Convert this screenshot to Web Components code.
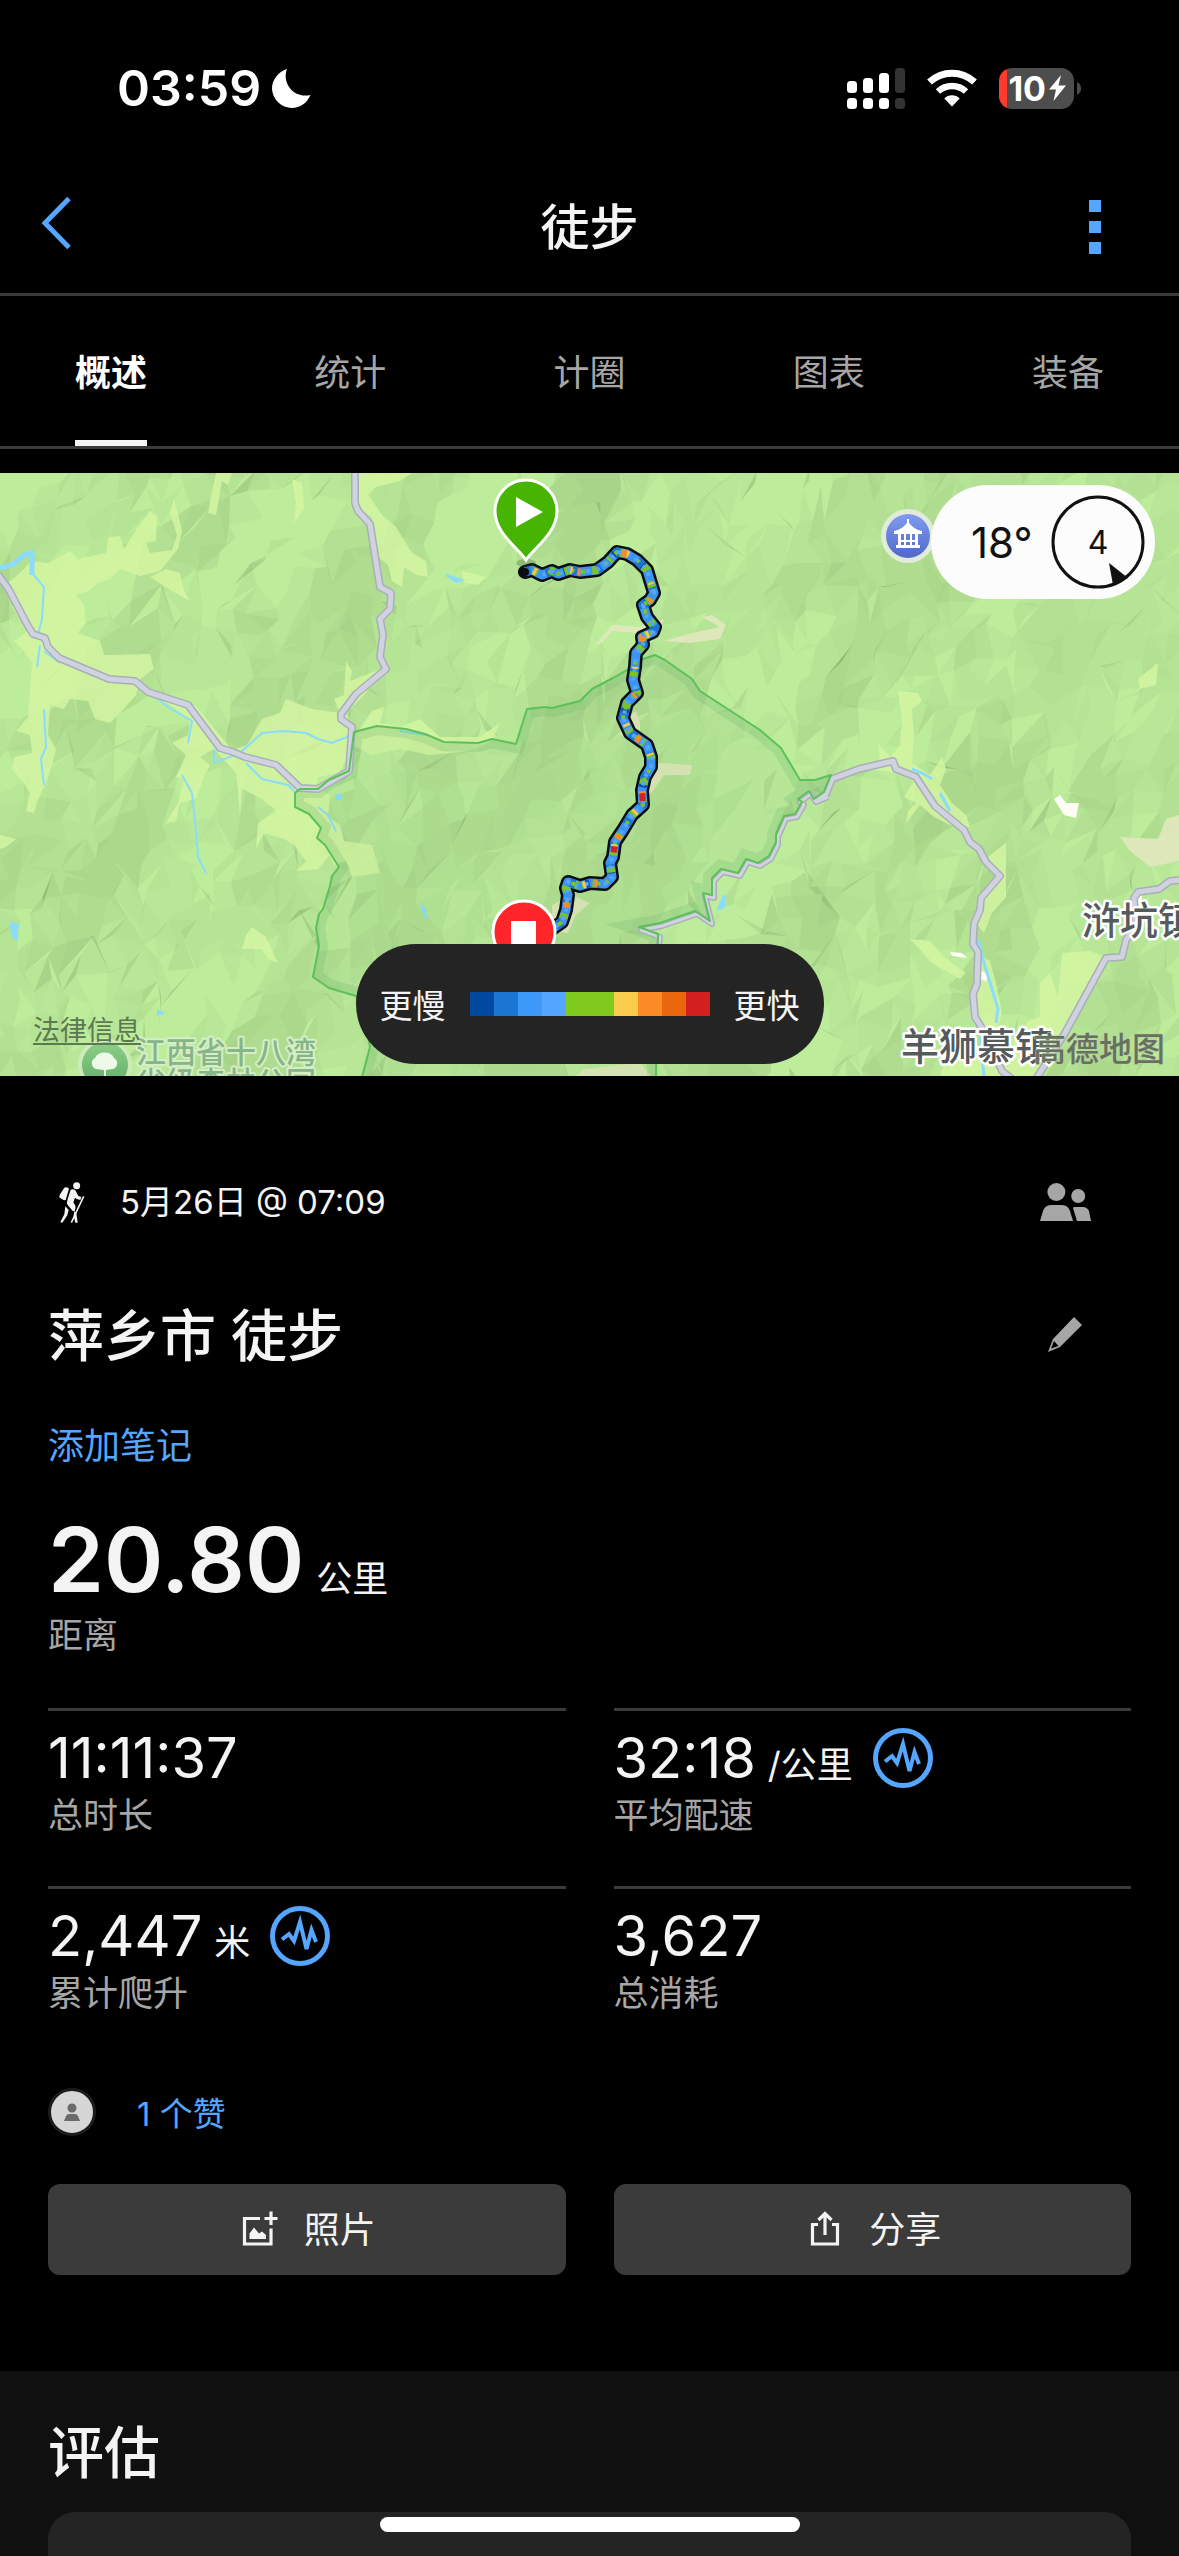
<!DOCTYPE html>
<html lang="zh-CN">
<head>
<meta charset="utf-8">
<meta name="viewport" content="width=device-width, initial-scale=1">
<title>徒步</title>
<style>
  html { background: #000; }
  body {
    margin: 0;
    color: #f4f4f4;
    font-family: Inter, "Noto Sans CJK SC", sans-serif;
    font-size: 36px;
    --accent: #54a6ff;
    --muted: #a6a6a6;
    --rule: #3a3a3a;
    --gutter: 48px;
  }
</style>
</head>
<body>
<activity-page>
  <status-bar slot="top" time="03:59" battery="10"></status-bar>
  <nav-header slot="top">徒步</nav-header>
  <tab-strip slot="top" labels="概述,统计,计圈,图表,装备" active="0"></tab-strip>
  <route-map>
    <weather-pill slot="weather" temp="18°" wind="4"></weather-pill>
    <pace-legend slot="legend"></pace-legend>
  </route-map>
  <activity-summary when="5月26日 @ 07:09" name="萍乡市 徒步">
    <stat-value hero value="20.80" unit="公里">距离</stat-value>
    <stat-value slot="stats" value="11:11:37">总时长</stat-value>
    <stat-value slot="stats" value="32:18" unit="/公里" chart>平均配速</stat-value>
    <stat-value slot="stats" value="2,447" unit="米" chart>累计爬升</stat-value>
    <stat-value slot="stats" value="3,627">总消耗</stat-value>
    <like-row slot="actions">1 个赞</like-row>
    <action-button slot="buttons" icon="photo">照片</action-button>
    <action-button slot="buttons" icon="share">分享</action-button>
  </activity-summary>
  <review-section>评估</review-section>
</activity-page>

<script>
class ActivityPage extends HTMLElement {
  constructor() {
    super();
    this.attachShadow({ mode: "open" });
    this.shadowRoot.innerHTML = `
      <style>
        :host { display: flex; flex-direction: column; height: 100vh; overflow: hidden; }
        header { flex: none; }
        main { flex: 1; display: flex; flex-direction: column; padding-top: 24px; min-height: 0; }
        .home { position: fixed; left: 50%; bottom: 24px; width: 420px; height: 15px; margin-left: -210px; border-radius: 8px; background: #fff; }
      </style>
      <header><slot name="top"></slot></header>
      <main><slot></slot></main>
      <div class="home"></div>
    `;
  }
}
customElements.define("activity-page", ActivityPage);

class StatusBar extends HTMLElement {
  constructor() {
    super();
    this.attachShadow({ mode: "open" });
    this.render();
  }

  render() {
    this.shadowRoot.innerHTML = `
      <style>
        :host { display: flex; align-items: center; justify-content: space-between; height: 176px; padding: 0 98px 0 117px; color: #fff; }
        .left, .right { display: flex; align-items: center; }
        .left { gap: 11px; font-size: 50px; font-weight: 600; }
        .right { gap: 22px; }
        svg { display: block; }
        .battery { display: flex; align-items: center; gap: 3px; }
        .cell {
          display: flex; align-items: center; justify-content: flex-end; gap: 3px; box-sizing: border-box;
          width: 75px; height: 41px; padding-right: 8px; border-radius: 13px;
          background: linear-gradient(90deg, #ff3b30 8px, #4d4d4d 8px);
          font-size: 34px; font-weight: 700; line-height: 41px;
        }
      </style>
      <div class="left">
        <span>${this.getAttribute("time")}</span>
        <svg width="39" height="39" viewBox="0 0 39 39"><path fill="#fff" d="M15 0C13 5 13 12 17 18C22 25 30 28 38.500 26C35 34 28 39 20 39A20 20 0 0 1 0 19.500C0 11 6 3 15 0Z"/></svg>
      </div>
      <div class="right">
        <svg width="58" height="41" viewBox="0 0 58 41" fill="#fff">
          <rect x="0" y="13" width="10" height="12" rx="3.500"/><rect x="16" y="10" width="10" height="15" rx="3.500"/>
          <rect x="32" y="5" width="10" height="20" rx="3.500"/><rect x="48" y="0" width="10" height="25" rx="3.500" fill="#333"/>
          <rect x="0" y="30" width="10" height="11" rx="3.500"/><rect x="16" y="30" width="10" height="11" rx="3.500"/>
          <rect x="32" y="30" width="10" height="11" rx="3.500"/><rect x="48" y="30" width="10" height="11" rx="3.500" fill="#333"/>
        </svg>
        <svg width="50" height="38" viewBox="0 0 50 38" fill="none" stroke="#fff">
          <path stroke-width="7" d="M2.500 13A33 33 0 0 1 47.500 13"/>
          <path stroke-width="6.500" d="M11 22.500A20.500 20.500 0 0 1 39 22.500"/>
          <path stroke="none" fill="#fff" d="M17.300 29.500A11 11 0 0 1 32.700 29.500L25 37.500Z"/>
        </svg>
        <div class="battery">
          <div class="cell">
            <span>${this.getAttribute("battery")}</span>
            <svg width="17" height="26" viewBox="0 0 17 26"><path fill="#fff" d="M12 0L0 14.500H7L4.500 26L17 10.500H9.500Z"/></svg>
          </div>
          <svg width="4" height="13" viewBox="0 0 4 13"><path fill="#4d4d4d" d="M0 0Q4 2 4 6.500T0 13Z"/></svg>
        </div>
      </div>
    `;
  }
}
customElements.define("status-bar", StatusBar);

class NavHeader extends HTMLElement {
  constructor() {
    super();
    this.attachShadow({ mode: "open" });
    this.shadowRoot.innerHTML = `
      <style>
        :host { display: grid; grid-template-columns: 1fr auto 1fr; align-items: center; height: 101px; padding: 0 36px 16px; border-bottom: 3px solid var(--rule); }
        h1 { margin: 0; padding-top: 2px; font-size: 49px; line-height: 60px; font-weight: 500; }
        button { display: flex; padding: 5px; border: 0; background: none; color: var(--accent); }
        .back { justify-self: start; align-self: start; padding-top: 20px; }
        .more { justify-self: end; padding-right: 42px; }
      </style>
      <button class="back" aria-label="返回">
        <svg width="30" height="54" viewBox="0 0 30 54"><path d="M28 2.500L4 27L28 51.500" fill="none" stroke="currentColor" stroke-width="5"/></svg>
      </button>
      <h1><slot></slot></h1>
      <button class="more" aria-label="更多">
        <svg width="12" height="54" viewBox="0 0 12 54" fill="currentColor"><rect width="12" height="12"/><rect y="21" width="12" height="12"/><rect y="42" width="12" height="12"/></svg>
      </button>
    `;
  }
}
customElements.define("nav-header", NavHeader);

class TabStrip extends HTMLElement {
  constructor() {
    super();
    this.attachShadow({ mode: "open" });
    this.render();
  }

  render() {
    const active = Number(this.getAttribute("active"));
    const tabs = this.getAttribute("labels").split(",").map((label, i) =>
      `<button role="tab" aria-selected="${i === active}">${label}</button>`).join("");
    this.shadowRoot.innerHTML = `
      <style>
        :host { display: block; border-bottom: 3px solid var(--rule); }
        div { display: flex; justify-content: space-between; padding: 0 75px; }
        button {
          height: 150px; padding: 3px 0 0; border: 0; border-bottom: 6px solid transparent; background: none;
          color: var(--muted); font: inherit; font-size: 36px;
        }
        button[aria-selected="true"] { color: #fff; font-weight: 700; border-color: #f4f4f4; }
      </style>
      <div role="tablist">${tabs}</div>
    `;
    this.shadowRoot.querySelectorAll("button").forEach((btn, i) => {
      btn.onclick = () => { this.setAttribute("active", i); this.render(); };
    });
  }
}
customElements.define("tab-strip", TabStrip);

// Low-poly hillshade, grouped in a few shade levels
function terrain(width, height, cell) {
  const hash = (x, y) => {
    const s = Math.sin(x * 127.1 + y * 311.7) * 43758.5453;
    return s - Math.floor(s);
  };
  const noise = (x, y) => {
    const xi = Math.floor(x), yi = Math.floor(y);
    const u = x - xi, v = y - yi;
    const a = hash(xi, yi) * (1 - u) + hash(xi + 1, yi) * u;
    const b = hash(xi, yi + 1) * (1 - u) + hash(xi + 1, yi + 1) * u;
    return a * (1 - v) + b * v;
  };
  const point = (i, j) => {
    const x = (i + (hash(i, j + 50) - 0.5) * 1.2) * cell;
    const y = (j + (hash(i + 90, j) - 0.5) * 1.2) * cell * 1.2;
    const p = x * 0.86 + y * 0.5, q = y * 0.86 - x * 0.5;
    const z = noise(p / 80, q / 110) * 62 + noise(q / 37 + 7, p / 45) * 30 + noise(x / 17, y / 23) * 6;
    return [x, y, z];
  };
  const levels = {};
  const add = (a, b, c) => {
    const ux = b[0] - a[0], uy = b[1] - a[1], uz = b[2] - a[2];
    const vx = c[0] - a[0], vy = c[1] - a[1], vz = c[2] - a[2];
    const nx = uy * vz - uz * vy, ny = uz * vx - ux * vz, nz = Math.abs(ux * vy - uy * vx) || 1;
    const light = (nx * 0.8 + ny * 0.6) / Math.hypot(nx, ny, nz);
    const shade = Math.max(0, Math.min(9, Math.round(2 + light * 6)));
    (levels[shade] ||= []).push(`M${a[0].toFixed()} ${a[1].toFixed()}L${b[0].toFixed()} ${b[1].toFixed()}L${c[0].toFixed()} ${c[1].toFixed()}Z`);
  };
  for (let j = -1; j * cell * 1.2 < height + cell; j++) {
    for (let i = -1; i * cell < width + cell; i++) {
      const a = point(i, j), b = point(i + 1, j), c = point(i, j + 1), d = point(i + 1, j + 1);
      if (hash(i, j) > 0.5) { add(a, b, c); add(b, d, c); }
      else { add(a, b, d); add(a, d, c); }
    }
  }
  return Object.entries(levels).map(([shade, d]) =>
    `<path fill="#4a6a38" fill-opacity="${(shade * 0.03).toFixed(3)}" d="${d.join("")}"/>`).join("");
}

const ROAD_WEST = "M355 0V30L358 38L370 51L380 114L391 120L390 136L380 146L383 162L380 184L386 196L356 221L341 241V246L352 254L349 298L318 316L300 315L276 292L245 284L233 279L220 275L188 232L148 219L135 208L109 206L59 185L48 174L45 165L33 161L28 153L8 115L-2 102";
const ROAD_EAST = "M814 328L826 321L832 306L859 296L893 288L896 296L916 304L935 333L964 357L970 369L979 376L986 389L1000 403L981 425L980 437L974 451L973 471L978 479L977 511L973 521L975 544L985 560L1002 598L1012 606";
const ROAD_SOUTH = "M1181 407L1170 408L1159 416L1138 419L1134 425L1136 453L1126 467L1122 484L1106 485L1065 560L1036 606";
const TRACK = "M826 321L814 326L809 318L798 326L802 329L795 341L784 343L776 361L776 369L769 383L758 390L746 386L738 400L721 396L712 405V422L703 420L710 448L695 438L660 450L639 454L658 461L656 476";
const PARK = "M362 604L370 574L364 540L356 523L329 515L313 504L319 473L316 455L319 441L323 436L330 413L332 403L339 394L325 372L317 365L321 355L309 341L295 334V320L300 316H318L329 307L349 298L354 259L377 253L406 256L425 261L444 269L478 270L492 266L516 271L527 236L545 234L552 235L580 228L592 216L613 205L627 197L640 187L655 182L665 187L692 206L700 218L760 257L781 275L800 307H815L831 302L824 319L814 326L809 318L798 326L802 329L795 341L784 343L776 361L776 369L769 383L758 390L746 386L738 400L721 396L712 405V422L703 420L710 448L695 438L660 450L639 454L658 461L656 604";
const ROUTE = "M525 99L532 97L542 102L552 98L558 101L570 97L580 99L597 97L608 89L617 79L627 81L637 87L647 97L650 107L654 120L650 127L643 132L647 144L655 154L653 159L642 164L643 172L636 180L635 194L633 207L637 220L627 230L623 245L630 260L647 272L651 284V294L645 304L642 317L643 332L632 342L623 357L615 369L613 384L610 390L612 404L605 411L590 410L580 413L568 409L566 415L568 422L566 437L562 449L552 456";

class RouteMap extends HTMLElement {
  constructor() {
    super();
    this.attachShadow({ mode: "open" });
    this.shadowRoot.innerHTML = `
      <style>
        :host { display: block; flex: none; position: relative; aspect-ratio: 1179 / 603; overflow: hidden; background: #bdec9b; }
        svg { position: absolute; inset: 0; width: 100%; height: 100%; }
        svg text { font-family: "Noto Sans CJK SC", sans-serif; paint-order: stroke; stroke-linejoin: round; }
        .town { font-size: 38px; font-weight: 500; fill: #555a5c; stroke: #fff; stroke-width: 5px; }
        .park-name { font-size: 30px; font-weight: 500; fill: #87b488; stroke: #d4efc4; stroke-width: 4px; }
        .brand { font-size: 33px; font-weight: 500; fill: #687062; stroke: #b9d3a4; stroke-width: 1px; }
        a { position: absolute; left: 33px; bottom: 30px; font-size: 27px; line-height: 30px; color: #5c7850; text-underline-offset: 3px; }
        .weather { position: absolute; top: 12px; right: 24px; }
        .legend { position: absolute; bottom: 12px; left: 0; right: 0; display: flex; justify-content: center; }
      </style>
      <svg viewBox="0 0 1179 603" preserveAspectRatio="xMidYMid slice" aria-label="路线地图">
        <defs>
          <clipPath id="park"><path d="${PARK}Z"/></clipPath>
          <linearGradient id="poi" x2="0" y2="1"><stop stop-color="#7f9cf0"/><stop offset="1" stop-color="#5068c8"/></linearGradient>
          <linearGradient id="tree" x2="0" y2="1"><stop stop-color="#8bcf86"/><stop offset="1" stop-color="#62ad68"/></linearGradient>
        </defs>
        <g>${terrain(1179, 603, 17)}</g>
        <g fill="#d6f6a3" fill-opacity=".8">
          <path d="M4 113L20 100L31 88L48 90L70 78L78 86L96 82L106 80L108 64L120 63L124 76L131 65L136 57L150 38L157 44L156 68L146 70L150 80L172 77L177 62L170 40L174 25L179 45L182 58L178 76L160 98L140 103L120 96L110 106L98 110L88 118L76 122L84 132L86 150L78 160L100 168L104 182L150 181L154 196L140 206L136 222L122 238L110 250L95 246L88 228L70 226L64 236L50 232L48 262L56 276L52 292L46 310L38 326L34 340L26 338L30 320L22 308L12 296L14 284L32 280L30 262L16 258L28 244L32 190L22 176L14 168L28 158L12 134L16 124Z"/>
          <path d="M150 104L166 96L180 100L184 118L190 128L172 118Z"/>
          <path d="M212 18L216 0H232L228 12L222 8L216 42L208 40ZM292 6L302 10L304 36L294 50L296 30ZM354 0H412L400 8L376 14L368 22L382 42L396 54L412 80L426 88L428 104L416 102L404 94L402 114L392 108L388 92L378 84L372 44L360 36Z"/>
          <path d="M150 218L196 233L232 277L247 272L262 246L280 240L286 226L312 236L340 240L334 226L344 222L346 188L352 198L350 208L386 194L364 222L346 240L356 262L372 238L384 234L380 250L400 254L420 246L440 264L480 264L500 250L492 268L470 278L430 282L400 276L372 282L352 272L340 300L318 304L316 314L330 322L328 344L340 352L344 368L372 372L380 400L352 404L346 388L334 392L330 382L318 396L296 398L306 388L294 372L284 366L264 360L256 376L258 350L276 338L262 326L242 316L240 344L238 318L236 300L214 276L200 284L210 292L204 304L196 326L180 330L176 348L166 350L178 330L184 306L176 304L186 282L172 270L188 262L190 246Z"/>
          <path d="M246 462L252 454L266 464L274 482L278 490L268 486L262 476L242 476ZM462 98L486 104L478 112L464 110Z"/>
          <path d="M0 362L16 366L6 374L0 376Z"/>
          <path d="M880 290L878 270L890 284L900 272L902 246L898 218L918 220L922 228L912 236L914 264L912 290L930 302L942 284L946 296L940 312L952 330L966 342L970 354L950 352L934 344L920 332L906 350L908 338L916 330L904 324L914 308L896 300L860 294Z"/>
          <path d="M988 384L1006 370L1006 424L992 440L984 460L976 450L984 424L1000 404ZM910 466L930 468L944 484L966 500L960 506L932 490ZM1138 206L1158 190L1156 212L1140 216Z"/>
          <path d="M978 480L990 488L996 510L1002 540L996 560L984 556L976 540ZM1040 510L1050 500L1058 524L1062 480L1090 478L1106 484L1066 560L1036 603H940L950 570L990 580L1020 560L1028 548L1040 544Z"/>
        </g>
        <g fill="#e4e7bf" fill-opacity=".85">
          <path d="M595 172L612 152L640 154L664 146L656 166L640 160L612 158L602 170ZM664 168L692 160L720 154L702 144L712 142L726 152L720 166L690 170ZM622 246L636 238L640 250L640 262L620 262ZM648 300L660 290L692 292L690 302L664 302L654 316L646 326Z"/>
          <path d="M552 432L572 422L590 430L576 442L568 460L552 458ZM584 596L640 590L652 603H576ZM1120 364L1158 366L1166 346L1179 342V388L1150 394L1130 378Z"/>
          <path fill="#fffdf4" fill-opacity="1" d="M1054 326L1060 322L1066 330L1079 330L1076 345L1064 342ZM950 479L962 480L967 485L952 483ZM978 496L990 502L986 508L978 505ZM1134 425L1142 420L1142 432L1134 434Z"/>
        </g>
        <g fill="none" stroke="#8bdcfb" stroke-width="2">
          <path stroke-width="5" d="M0 95L12 92L24 82L32 80L32 102"/>
          <path d="M32 100L44 114L42 146L38 162M40 172L37 194M44 236L46 274L41 286L44 312M60 190L44 178M150 220L168 234L192 248L188 270M214 276V290L240 280L262 260L284 258L306 260L318 266L332 270L352 262M246 290L262 306L288 312L296 320M182 302L192 320L196 358L198 384L206 400M318 334L328 342L336 358M400 258L426 262"/>
          <path d="M912 296L922 300L932 306M940 320L950 338M978 466L984 490L992 516L998 536L996 550M980 564L984 603" stroke-width="3"/>
          <path fill="#8bdcfb" d="M446 102L462 107L456 109ZM11 450L18 452L16 466L12 462ZM158 538L164 540L158 541ZM718 436L724 422L724 434ZM421 432L425 436L426 446ZM336 322H341V326H336Z"/>
        </g>
        <path d="${PARK}Z" fill="#7db070" fill-opacity=".09"/>
        <g clip-path="url(#park)"><path d="${PARK}" fill="none" stroke="#5fb06a" stroke-opacity=".2" stroke-width="18"/></g>
        <g fill="none" stroke-linejoin="round">
          <g stroke="#a9afb9"><path stroke-width="8" d="${ROAD_WEST}"/><path stroke-width="8" d="${ROAD_EAST}"/><path stroke-width="8" d="${ROAD_SOUTH}"/><path stroke-width="6" transform="translate(2 3)" d="${TRACK}"/></g>
          <g stroke="#d0d2e0"><path stroke-width="5" d="${ROAD_WEST}"/><path stroke-width="5" d="${ROAD_EAST}"/><path stroke-width="5" d="${ROAD_SOUTH}"/><path stroke-width="3" transform="translate(2 3)" d="${TRACK}"/></g>
          <path d="${PARK}" stroke="#5dc159" stroke-width="2"/>
        </g>
        <g fill="none" stroke-linejoin="round">
          <path d="${ROUTE}" stroke="#0b0d10" stroke-width="14" stroke-linecap="round"/>
          <path d="${ROUTE}" stroke="#3b94f3" stroke-width="9"/>
          <path d="${ROUTE}" stroke="#0d51a5" stroke-width="8" stroke-dasharray="4 38 5 51 3 29"/>
          <path d="${ROUTE}" stroke="#1d76d6" stroke-width="9" stroke-dasharray="6 17 7 21"/>
          <path d="${ROUTE}" stroke="#7cc41f" stroke-width="8" stroke-dasharray="5 15 3 12 6 22" stroke-dashoffset="-8"/>
          <path d="${ROUTE}" stroke="#7cc41f" stroke-width="4" stroke-dasharray="3 6 5 11"/>
          <path d="${ROUTE}" stroke="#54a6ff" stroke-width="4" stroke-dasharray="3 5 4 7"/>
          <path d="${ROUTE}" stroke="#fac748" stroke-width="7" stroke-dasharray="3 37 2 61" stroke-dashoffset="-9"/>
          <path d="${ROUTE}" stroke="#f98a26" stroke-width="7" stroke-dasharray="5 57 3 49" stroke-dashoffset="-108"/>
          <path d="${ROUTE}" stroke="#d62121" stroke-width="6" stroke-dasharray="0 400 8 55 6 600"/>
          <circle cx="525" cy="99" r="4" fill="#0b0d10"/>
        </g>
        <ellipse cx="526" cy="90" rx="10" ry="4" fill="#2c4720" fill-opacity=".25"/>
        <path d="M526 87C517 74 495 60 495 38A31 31 0 0 1 557 38C557 60 535 74 526 87Z" fill="#46b400" stroke="#fff" stroke-width="3"/>
        <path d="M516 24V54L543 39Z" fill="#fff"/>
        <path d="M524 509C515 496 493 481 493 459A31 31 0 0 1 555 459C555 481 533 496 524 509Z" fill="#ff2528" stroke="#fff" stroke-width="3"/>
        <rect x="511" y="448" width="25" height="25" fill="#fff"/>

        <circle cx="908" cy="63" r="27" fill="#e1ebda"/>
        <circle cx="908" cy="63" r="22" fill="url(#poi)"/>
        <path fill="#fff" d="M907 46H909V50C912 54 917 57 922 58V61H894V58C899 57 904 54 907 50ZM898 61H901V72H898ZM904 61H906V72H904ZM910 61H912V72H910ZM915 61H918V72H915ZM900 67H916V69H900ZM896 72H920V75H896Z"/>
        <circle cx="105" cy="592" r="27" fill="#cfeab9"/>
        <circle cx="105" cy="592" r="23" fill="url(#tree)"/>
        <path fill="#edf8e8" d="M96 596A6 6 0 0 1 95 585A10 8 0 0 1 114 585A6 6 0 0 1 113 596L106 597V603H104V597Z"/>
        <text class="park-name" x="136" y="590">江西省十八湾</text>
        <text class="park-name" x="136" y="620">省级森林公园</text>
        <text class="town" x="1082" y="461">浒坑镇</text>
        <text class="town" x="901" y="587">羊狮慕镇</text>
        <text class="brand" x="1033" y="588">高德地图</text>
      </svg>
      <a href="#legal">法律信息</a>
      <div class="weather"><slot name="weather"></slot></div>
      <div class="legend"><slot name="legend"></slot></div>
    `;
  }
}
customElements.define("route-map", RouteMap);

class WeatherPill extends HTMLElement {
  constructor() {
    super();
    this.attachShadow({ mode: "open" });
    this.shadowRoot.innerHTML = `
      <style>
        :host { display: flex; align-items: center; justify-content: space-between; box-sizing: border-box; width: 224px; height: 114px; padding: 0 9px 0 40px; border-radius: 57px; background: #fcfcfc; color: #111; font-size: 42px; }
        .wind { position: relative; display: grid; place-items: center; width: 96px; height: 96px; font-size: 32px; }
        svg { position: absolute; inset: 0; }
      </style>
      <span>${this.getAttribute("temp")}</span>
      <div class="wind">
        <svg width="96" height="96" viewBox="0 0 96 96"><circle cx="48" cy="48" r="45" fill="none" stroke="#111" stroke-width="3"/><path fill="#111" d="M59 69L63 91L78 84Z"/></svg>
        ${this.getAttribute("wind")}
      </div>
    `;
  }
}
customElements.define("weather-pill", WeatherPill);

class PaceLegend extends HTMLElement {
  constructor() {
    super();
    this.attachShadow({ mode: "open" });
    const colors = ["#0049a0", "#1a75d3", "#3d99f7", "#54a6ff", "#7fca1c", "#7fca1c", "#fbcb4b", "#fa8b27", "#ea670d", "#d41f20"];
    this.shadowRoot.innerHTML = `
      <style>
        :host { display: flex; align-items: center; gap: 24px; height: 120px; padding: 0 24px; border-radius: 60px; background: #242424; font-size: 33px; }
        .scale { display: flex; width: 240px; height: 24px; }
        i { flex: 1; }
      </style>
      <span>更慢</span>
      <div class="scale">${colors.map((c) => `<i style="background:${c}"></i>`).join("")}</div>
      <span>更快</span>
    `;
  }
}
customElements.define("pace-legend", PaceLegend);

class ActivitySummary extends HTMLElement {
  constructor() {
    super();
    this.attachShadow({ mode: "open" });
    this.shadowRoot.innerHTML = `
      <style>
        :host { display: block; flex: none; padding: 78px var(--gutter) 96px; }
        .row { display: flex; align-items: center; height: 96px; }
        .row + .row { height: 92px; margin-top: 38px; }
        .date { gap: 35px; padding-left: 11px; font-size: 33px; line-height: 46px; }
        .row button { display: flex; justify-content: center; width: 132px; margin-left: auto; padding: 0; border: 0; background: none; color: var(--muted); }
        h2 { margin: 0; padding-bottom: 6px; font-size: 56px; font-weight: 500; }
        a { display: block; width: max-content; margin: 42px 0; color: var(--accent); line-height: 48px; text-decoration: none; }
        .stats { display: grid; grid-template-columns: 1fr 1fr; column-gap: 48px; margin-top: 46px; }
        .buttons { display: grid; grid-template-columns: 1fr 1fr; gap: 48px; margin-top: 48px; }
      </style>
      <div class="row date">
        <svg width="26" height="41" viewBox="57 65 78 123" fill="#f4f4f4">
          <circle cx="110" cy="76" r="10.500"/>
          <path d="M73 82Q80 79 87 85L77 119L72 120L59 112Q57 108 59 104Z"/>
          <path d="M92 88Q100 84 107 91L115 107L124 110L121 119L110 116L105 112L100 126L106 136Q108 141 104 152L99 153L83 134Q79 128 82 120Z"/>
          <path d="M76 138L86 149L82 165L67 187L61 185L73 162ZM103 152L109 158L113 187H106L101 166Z"/>
          <path d="M131 108L94 187" stroke="#f4f4f4" stroke-width="4.500"/>
        </svg>
        <span>${this.getAttribute("when")}</span>
        <button aria-label="参与者">
          <svg width="51" height="38" viewBox="0 0 51 38" fill="currentColor"><circle cx="16.400" cy="9" r="9"/><circle cx="38.200" cy="13" r="7"/><path d="M0 38L3 28Q5 22 11 22H22Q28 22 30 28L33 38ZM33 25Q33 24 35 24H43Q47 24 49 28L51 38H37Z"/></svg>
        </button>
      </div>
      <div class="row">
        <h2>${this.getAttribute("name")}</h2>
        <button aria-label="编辑">
          <svg width="34" height="35" viewBox="0 0 34 35"><path fill="currentColor" fill-rule="evenodd" d="M26 0L34 8L12 30L0 35L5 22ZM6 24L10.500 29L3 31.500Z"/></svg>
        </button>
      </div>
      <a href="#note">添加笔记</a>
      <slot></slot>
      <div class="stats"><slot name="stats"></slot></div>
      <slot name="actions"></slot>
      <div class="buttons"><slot name="buttons"></slot></div>
    `;
  }
}
customElements.define("activity-summary", ActivitySummary);

class StatValue extends HTMLElement {
  constructor() {
    super();
    this.attachShadow({ mode: "open" });
    const unit = this.getAttribute("unit");
    this.shadowRoot.innerHTML = `
      <style>
        :host { display: block; box-sizing: border-box; height: 178px; padding-top: 17px; border-top: 3px solid var(--rule); }
        :host([hero]) { height: auto; padding: 0; border: 0; }
        .value { display: flex; align-items: center; height: 60px; }
        .text { display: flex; align-items: baseline; gap: 12px; }
        b { font-size: 56px; line-height: 60px; font-weight: 400; }
        .unit { font-size: 36px; line-height: 36px; }
        button { display: flex; margin-left: 20px; padding: 0; border: 0; background: none; color: var(--accent); }
        .label { color: var(--muted); font-size: 35px; line-height: 54px; }
        :host([hero]) .value { height: 96px; }
        :host([hero]) b { font-size: 90px; line-height: 96px; font-weight: 600; }
      </style>
      <div class="value">
        <div class="text"><b>${this.getAttribute("value")}</b>${unit ? `<span class="unit">${unit}</span>` : ""}</div>
        ${this.hasAttribute("chart") ? `<button aria-label="查看图表"><svg width="60" height="60" viewBox="0 0 60 60" fill="none" stroke="currentColor"><circle cx="30" cy="30" r="27.500" stroke-width="5"/><path stroke-width="4" d="M12 33.500L19 28L24 35L30 16L36.500 43L41.500 24L46 36"/></svg></button>` : ""}
      </div>
      <div class="label"><slot></slot></div>
    `;
  }
}
customElements.define("stat-value", StatValue);

class LikeRow extends HTMLElement {
  constructor() {
    super();
    this.attachShadow({ mode: "open" });
    this.shadowRoot.innerHTML = `
      <style>
        :host { display: flex; align-items: center; gap: 41px; height: 48px; margin-top: 24px; }
        a { color: var(--accent); font-size: 33px; text-decoration: none; }
      </style>
      <svg width="48" height="48" viewBox="0 0 48 48"><circle cx="24" cy="24" r="22.500" fill="#d6d6d6" stroke="#1c1c1c" stroke-width="3"/><circle cx="24" cy="20" r="4.500" fill="#6b6b6b"/><path fill="#6b6b6b" d="M16 33L18 28Q19 26 21 26H27Q29 26 30 28L32 33Z"/></svg>
      <a href="#likes"><slot></slot></a>
    `;
  }
}
customElements.define("like-row", LikeRow);

const BUTTON_ICONS = {
  photo: `<path d="M22 12.500H6.500V38H33V22.500M26.500 12.500H39.500M33 5.500V19" fill="none" stroke="currentColor" stroke-width="3.200"/><path fill="currentColor" d="M11.500 33V27.500L16 21.500L21 27.500L24 25.500L28 29V33Z"/>`,
  share: `<path d="M15 18.500H9.500V38H34.500V18.500H29M22 29V8M15.500 14L22 7.500L28.500 14" fill="none" stroke="currentColor" stroke-width="3.200"/>`,
};

class ActionButton extends HTMLElement {
  constructor() {
    super();
    this.attachShadow({ mode: "open" });
    this.shadowRoot.innerHTML = `
      <style>
        :host { display: block; }
        button { display: flex; align-items: center; justify-content: center; gap: 18px; width: 100%; height: 91px; padding: 0; border: 0; border-radius: 12px; background: #3b3b3b; color: inherit; font: inherit; line-height: 50px; }
      </style>
      <button><svg width="48" height="48" viewBox="0 0 48 48">${BUTTON_ICONS[this.getAttribute("icon")]}</svg><span><slot></slot></span></button>
    `;
  }
}
customElements.define("action-button", ActionButton);

class ReviewSection extends HTMLElement {
  constructor() {
    super();
    this.attachShadow({ mode: "open" });
    this.shadowRoot.innerHTML = `
      <style>
        :host { display: flex; flex: 1; flex-direction: column; padding: 42px var(--gutter) 0; background: #101010; }
        h2 { margin: 0 0 19px; font-size: 56px; line-height: 80px; font-weight: 500; }
        .card { flex: 1; border-radius: 27px 27px 0 0; background: #242424; }
      </style>
      <h2><slot></slot></h2>
      <div class="card"></div>
    `;
  }
}
customElements.define("review-section", ReviewSection);
</script>
</body>
</html>
